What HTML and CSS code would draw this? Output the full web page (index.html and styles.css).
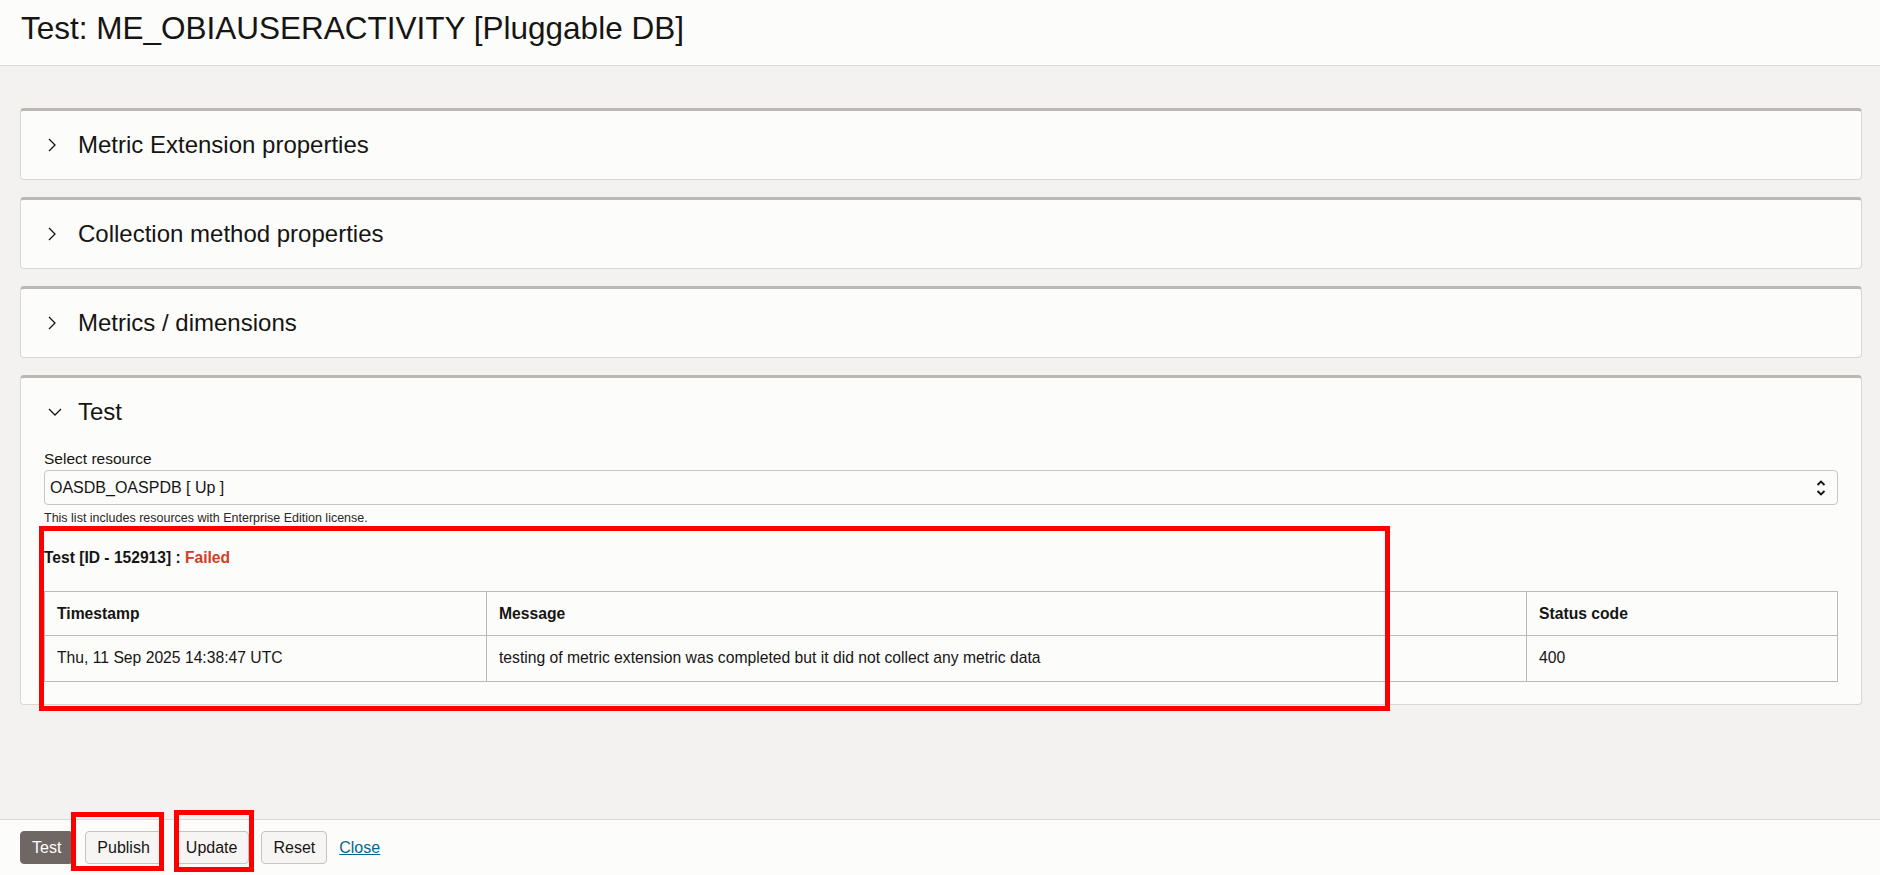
FILE: index.html
```html
<!DOCTYPE html>
<html lang="en">
<head>
<meta charset="UTF-8" />
<meta name="viewport" content="width=device-width, initial-scale=1" />
<title>Test: ME_OBIAUSERACTIVITY</title>
<link rel="stylesheet" href="styles.css">
</head>
<body>

<header class="page-header">
  <h1>Test: ME_OBIAUSERACTIVITY [Pluggable DB]</h1>
</header>

<main class="page-body">
  <section class="panel">
    <div class="panel-head">
      <span class="chev"><svg width="8" height="14" viewBox="0 0 8 14"><polyline points="1,1 7,7 1,13" fill="none" stroke="#161513" stroke-width="1.3"/></svg></span>
      <h2>Metric Extension properties</h2>
    </div>
  </section>

  <section class="panel">
    <div class="panel-head">
      <span class="chev"><svg width="8" height="14" viewBox="0 0 8 14"><polyline points="1,1 7,7 1,13" fill="none" stroke="#161513" stroke-width="1.3"/></svg></span>
      <h2>Collection method properties</h2>
    </div>
  </section>

  <section class="panel">
    <div class="panel-head">
      <span class="chev"><svg width="8" height="14" viewBox="0 0 8 14"><polyline points="1,1 7,7 1,13" fill="none" stroke="#161513" stroke-width="1.3"/></svg></span>
      <h2>Metrics / dimensions</h2>
    </div>
  </section>

  <section class="panel">
    <div class="panel-head">
      <span class="chev"><svg width="14" height="8" viewBox="0 0 14 8"><polyline points="1,1 7,7 13,1" fill="none" stroke="#161513" stroke-width="1.3"/></svg></span>
      <h2>Test</h2>
    </div>
    <div class="panel-content">
      <label class="field-label">Select resource</label>
      <div class="select-box">
        <span>OASDB_OASPDB [ Up ]</span>
        <svg width="10" height="18" viewBox="0 0 10 18">
          <polyline points="1.5,6 5,2.5 8.5,6" fill="none" stroke="#161513" stroke-width="1.8"/>
          <polyline points="1.5,12 5,15.5 8.5,12" fill="none" stroke="#161513" stroke-width="1.8"/>
        </svg>
      </div>
      <div class="help-text">This list includes resources with Enterprise Edition license.</div>

      <div class="result-title">Test [ID - 152913] : <span class="failed">Failed</span></div>
      <table class="result-table">
        <colgroup>
          <col class="col-time">
          <col class="col-msg">
          <col>
        </colgroup>
        <tr>
          <th>Timestamp</th>
          <th>Message</th>
          <th>Status code</th>
        </tr>
        <tr>
          <td>Thu, 11 Sep 2025 14:38:47 UTC</td>
          <td>testing of metric extension was completed but it did not collect any metric data</td>
          <td>400</td>
        </tr>
      </table>
    </div>
    <div class="mark mark-result"></div>
  </section>
</main>

<footer class="page-footer">
  <button class="btn btn-primary">Test</button>
  <button class="btn">Publish</button>
  <button class="btn">Update</button>
  <button class="btn">Reset</button>
  <a href="#" class="link">Close</a>
  <div class="mark mark-publish"></div>
  <div class="mark mark-update"></div>
</footer>

</body>
</html>
```

FILE: styles.css
```css
body {
  margin: 0;
  height: 100vh;
  display: flex;
  flex-direction: column;
  background: #f3f2f1;
  color: #161513;
  font-family: "Liberation Sans", Arial, sans-serif;
  overflow: hidden;
}

/* Titre */
.page-header {
  height: 65px;
  padding: 0 21px;
  background: #fcfcfb;
  border-bottom: 1px solid #dcdad6;
}
.page-header h1 {
  margin: 0;
  padding-top: 9px;
  font-size: 31.5px;
  font-weight: normal;
  line-height: 38px;
}

.page-body {
  flex: 1;
  padding: 42px 18px 0 20px;
}

/* Panneaux repliables */
.panel {
  position: relative;
  background: #fcfcfb;
  border: 1px solid #d9d6d3;
  border-top: 3px solid #bcb7b2;
  border-radius: 4px;
  margin-bottom: 17px;
}
.panel-head {
  display: flex;
  align-items: center;
  height: 68px;
  padding-left: 27px;
}
.chev {
  width: 30px;
  display: flex;
  align-items: center;
}
.panel-head h2 {
  margin: 0;
  font-size: 24px;
  font-weight: normal;
}

.panel-content {
  padding: 4px 23px 22px 23px;
}
.field-label {
  display: block;
  font-size: 15.5px;
  line-height: 18px;
  margin-bottom: 2px;
}
.select-box {
  height: 35px;
  box-sizing: border-box;
  border: 1px solid #c9c6c2;
  border-radius: 4px;
  display: flex;
  align-items: center;
  justify-content: space-between;
  padding: 0 11px 0 5px;
  font-size: 16px;
}
.select-box svg {
  display: block;
}
.help-text {
  margin-top: 6px;
  font-size: 12.5px;
  line-height: 15px;
  color: #2b2825;
}

.result-title {
  margin-top: 23px;
  font-size: 15.6px;
  font-weight: bold;
  line-height: 18px;
}
.failed {
  color: #d63b25;
}

.result-table {
  margin-top: 24px;
  width: 100%;
  border-collapse: collapse;
  table-layout: fixed;
  font-size: 15.7px;
}
.col-time { width: 442px; }
.col-msg { width: 1040px; }
.result-table th,
.result-table td {
  height: 43px;
  padding: 0 12px;
  border: 1px solid #bdbab6;
  text-align: left;
}
.result-table td {
  padding-bottom: 2px;
}

/* Barre du bas */
.page-footer {
  position: relative;
  height: 55px;
  display: flex;
  align-items: center;
  gap: 12px;
  padding: 0 20px;
  background: #fcfcfb;
  border-top: 1px solid #dcdad6;
}
.btn {
  height: 33px;
  padding: 0 11px;
  font-family: inherit;
  font-size: 16px;
  color: #161513;
  background: #f6f5f3;
  border: 1px solid #c7c3bf;
  border-radius: 4px;
}
.btn-primary {
  background: #6f6763;
  border-color: #6f6763;
  color: #fff;
}
.link {
  font-size: 16px;
  color: #00688c;
}

/* Cadres rouges d'annotation */
.mark {
  position: absolute;
  box-sizing: border-box;
  border: 5px solid #ff0000;
}
.mark-result {
  left: 18px;
  top: 148px;
  width: 1351px;
  height: 185px;
}
.mark-publish {
  left: 71px;
  top: -8px;
  width: 93px;
  height: 59px;
}
.mark-update {
  left: 174px;
  top: -10px;
  width: 80px;
  height: 62px;
}
```
